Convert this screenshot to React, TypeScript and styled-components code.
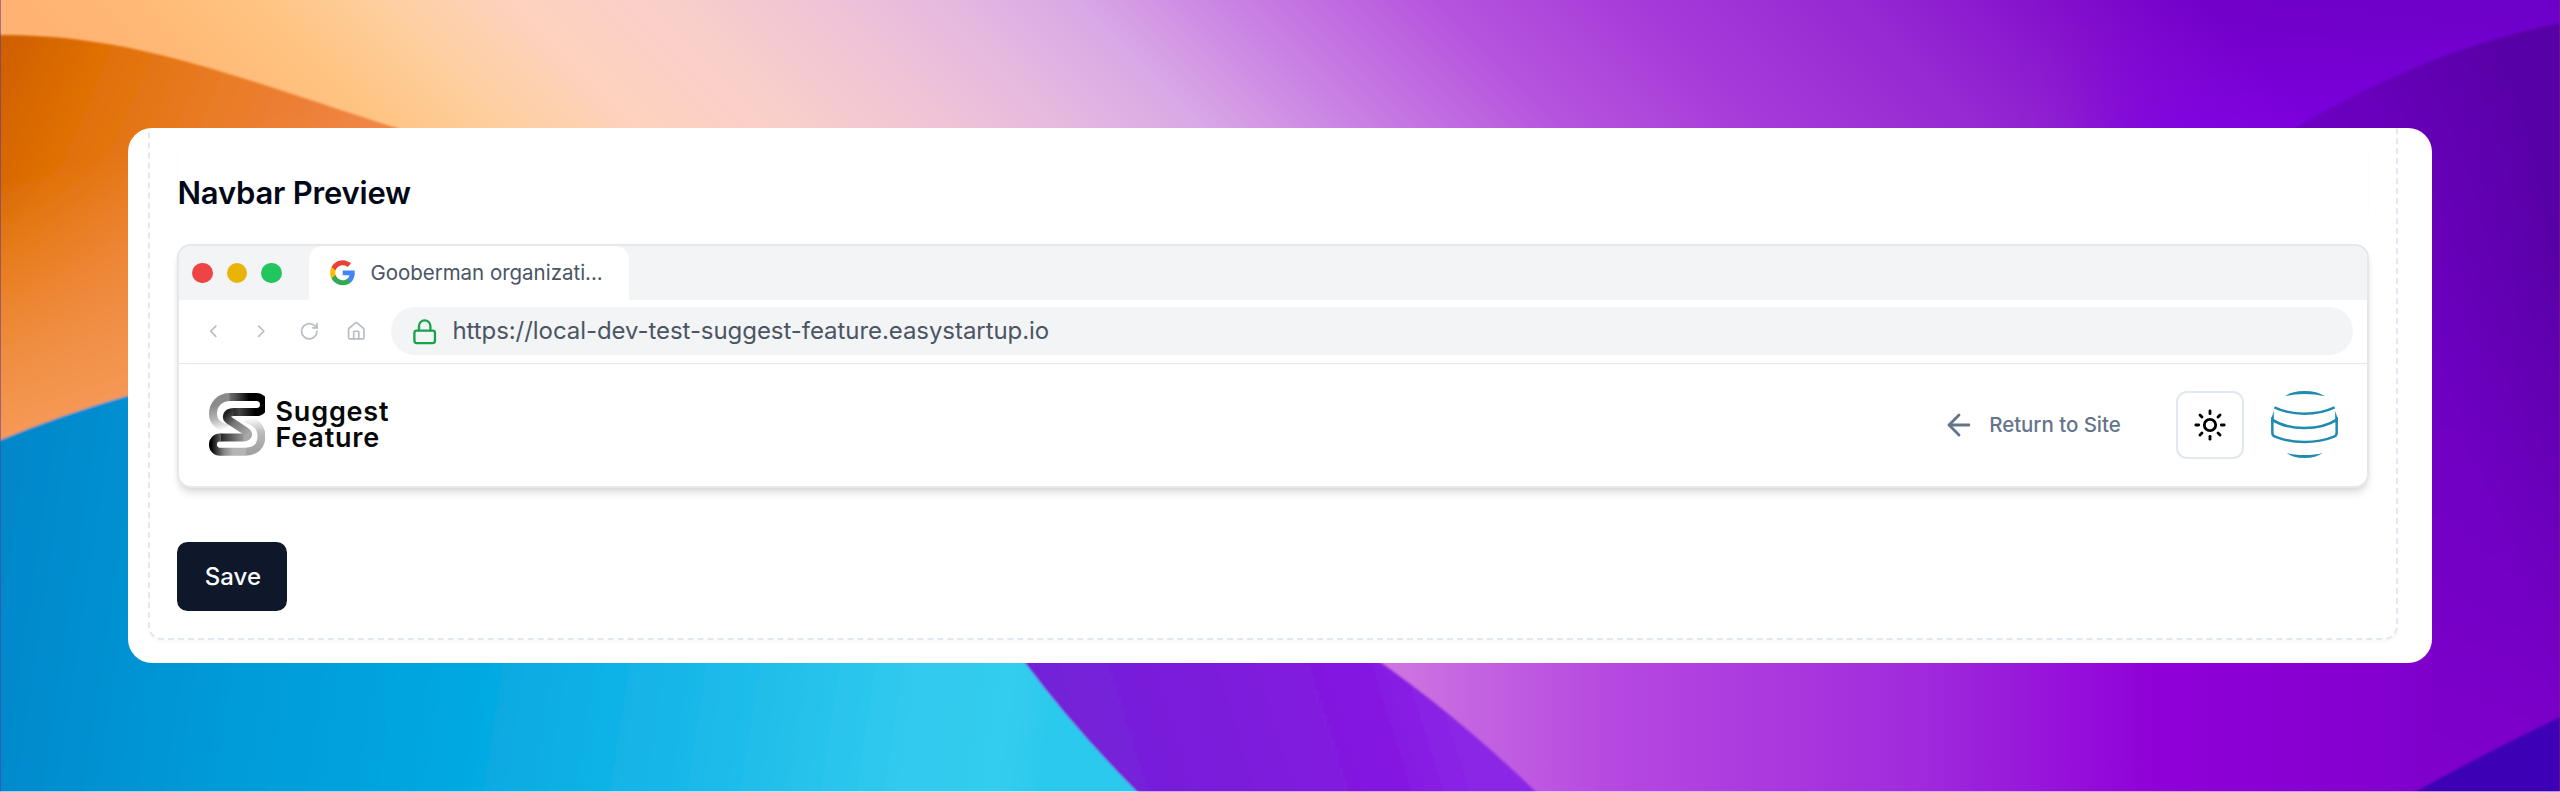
import React from 'react';
import styled, { createGlobalStyle } from 'styled-components';
import { ArrowLeft, ChevronLeft, ChevronRight, House, Lock, RotateCw, Sun } from 'lucide-react';

const GlobalStyle = createGlobalStyle`
  * { box-sizing: border-box; }
  html, body { margin: 0; padding: 0; overflow: hidden; }
  body { font-family: Inter, "Liberation Sans", sans-serif; }
`;

const Page = styled.main`
  position: relative;
  width: 2560px;
  height: 792px;
  padding: 128px 128px 129px;
  overflow: hidden;
`;

const WallpaperSvg = styled.svg`
  position: absolute;
  inset: 0;
  display: block;
`;

const Card = styled.section`
  position: relative;
  height: 535px;
  padding: 0 34px 23px 20px;
  border-radius: 24px;
  background: #fff;
  overflow: hidden;
`;

const DashedPanel = styled.div`
  height: 512px;
  padding: 11px 27px 0;
  border: 2px dashed #e2e8f0;
  border-top: 0;
  border-radius: 0 0 14px 14px;
  box-shadow: 0 2px 3px rgba(0, 0, 0, 0.03);
`;

const PreviewSection = styled.div`
  display: flex;
  flex-direction: column;
  align-items: stretch;
  border: 1px solid #fcfcfd;
  border-bottom: 0;
  border-radius: 15px 15px 0 0;
`;

const Title = styled.h3`
  margin: 33px 0 0 -0.5px;
  font-size: 31px;
  line-height: 40px;
  font-weight: 600;
  letter-spacing: -0.2px;
  color: #020817;
`;

const Browser = styled.div`
  height: 244px;
  margin: 31px 0 0;
  border: 2px solid #e5e7eb;
  border-radius: 14px;
  background: #fff;
  box-shadow: 0 7px 10px -2px rgba(0, 0, 0, 0.11), 0 3px 7px -3px rgba(0, 0, 0, 0.12);
  overflow: hidden;
`;

const TabStrip = styled.div`
  display: flex;
  height: 54px;
  padding-left: 13.4px;
  background: #f3f4f6;
`;

const WindowDots = styled.div`
  display: flex;
  align-items: center;
  gap: 13.7px;
  width: 116.6px;
`;

const Dot = styled.span<{ $color: string }>`
  width: 20.6px;
  height: 20.6px;
  border-radius: 50%;
  background: ${({ $color }) => $color};
`;

const Tab = styled.div`
  display: flex;
  align-items: center;
  gap: 13.5px;
  width: 320px;
  padding: 0 0 1px 20.5px;
  border-radius: 14px 14px 0 0;
  background: #fff;
  color: #4b5563;
  font-size: 20.5px;
  line-height: 27px;
  letter-spacing: -0.02px;
  white-space: nowrap;
`;

const Toolbar = styled.div`
  display: flex;
  align-items: center;
  height: 63.5px;
  padding: 0 14.2px 0 0;
  border-bottom: 1.7px solid #e2e8f0;
`;

const ToolbarIcons = styled.div`
  display: flex;
  gap: 27.3px;
  width: 211.5px;
  padding-left: 24px;
  color: #b9bdc5;
`;

const AddressBar = styled.div`
  display: flex;
  align-items: center;
  gap: 14px;
  flex: 1;
  height: 48px;
  padding-left: 20.5px;
  border-radius: 24px;
  background: #f3f4f6;
  color: #16a34a;
`;

const Url = styled.span`
  color: #4b5563;
  font-size: 24px;
  line-height: 34px;
  letter-spacing: -0.06px;
`;

const Navbar = styled.div`
  display: flex;
  align-items: center;
  justify-content: space-between;
  height: 122px;
  padding: 0 28.8px 0 29.5px;
`;

const Brand = styled.div`
  display: flex;
  align-items: center;
  gap: 10.5px;
`;

const BrandName = styled.div`
  display: flex;
  flex-direction: column;
  color: #080808;
  font-size: 27px;
  font-weight: 600;
  letter-spacing: 0.8px;
  line-height: 26px;
`;

const NavActions = styled.div`
  display: flex;
  align-items: center;
`;

const ReturnLink = styled.a`
  display: flex;
  align-items: center;
  gap: 13.5px;
  margin-right: 55px;
  color: #64748b;
  font-size: 20.5px;
  font-weight: 500;
  letter-spacing: -0.05px;
  white-space: nowrap;
`;

const ArrowSlot = styled.span`
  display: flex;
  width: 34px;
`;

const ThemeButton = styled.button`
  display: flex;
  align-items: center;
  justify-content: center;
  width: 68px;
  height: 68px;
  margin: 0 27.5px 0 0;
  padding: 0;
  border: 2px solid #e2e8f0;
  border-radius: 11px;
  background: #fff;
  color: #000;
`;

const SaveButton = styled.button`
  display: block;
  width: 110px;
  height: 68.5px;
  margin: 54px 0 0 0.4px;
  padding: 0 0 0 1px;
  border: 0;
  border-radius: 10.5px;
  background: #0f172a;
  color: #f8fafc;
  font-family: inherit;
  font-size: 24px;
  font-weight: 500;
`;

function Wallpaper() {
  return (
    <WallpaperSvg width="2560" height="792" viewBox="0 0 2560 792" preserveAspectRatio="none">
      <defs>
        <linearGradient id="sky" gradientUnits="userSpaceOnUse" x1="0" y1="0" x2="1280" y2="-1280">
          <stop offset="0" stopColor="#ffb272" />
          <stop offset="0.05" stopColor="#ffb976" />
          <stop offset="0.1" stopColor="#ffc482" />
          <stop offset="0.15" stopColor="#fecfa0" />
          <stop offset="0.2" stopColor="#fdd2be" />
          <stop offset="0.26" stopColor="#f9cfca" />
          <stop offset="0.32" stopColor="#f0c3d6" />
          <stop offset="0.37" stopColor="#e5b8e0" />
          <stop offset="0.42" stopColor="#d9a8e6" />
          <stop offset="0.48" stopColor="#ca82e3" />
          <stop offset="0.56" stopColor="#b654de" />
          <stop offset="0.64" stopColor="#a63ad9" />
          <stop offset="0.73" stopColor="#9428d2" />
          <stop offset="0.8" stopColor="#8410cc" />
          <stop offset="0.86" stopColor="#7000c6" />
          <stop offset="1" stopColor="#6a00c6" />
        </linearGradient>
        <linearGradient id="skyGlow" gradientUnits="userSpaceOnUse" x1="0" y1="0" x2="0" y2="140">
          <stop offset="0" stopColor="#7c00e0" stopOpacity="0" />
          <stop offset="1" stopColor="#8000e6" stopOpacity="0.85" />
        </linearGradient>
        <linearGradient id="pink" gradientUnits="userSpaceOnUse" x1="1380" y1="0" x2="2560" y2="0">
          <stop offset="0" stopColor="#d078e0" />
          <stop offset="0.08" stopColor="#c463e1" />
          <stop offset="0.2" stopColor="#b548e0" />
          <stop offset="0.46" stopColor="#a02adc" />
          <stop offset="0.66" stopColor="#8f00d8" />
          <stop offset="0.86" stopColor="#8300cf" />
          <stop offset="1" stopColor="#6c00b5" />
        </linearGradient>
        <linearGradient id="dusk" gradientUnits="userSpaceOnUse" x1="2290" y1="400" x2="2580" y2="310">
          <stop offset="0" stopColor="#7400c6" />
          <stop offset="0.5" stopColor="#6d00c1" />
          <stop offset="1" stopColor="#5800a6" />
        </linearGradient>
        <linearGradient id="duskFade" x1="0" y1="0" x2="0" y2="1">
          <stop offset="0" stopColor="#5a00a8" stopOpacity="0.3" />
          <stop offset="0.3" stopColor="#6c00c0" stopOpacity="0" />
          <stop offset="1" stopColor="#8c00d2" stopOpacity="0.6" />
        </linearGradient>
        <linearGradient id="orange" gradientUnits="userSpaceOnUse" x1="0" y1="60" x2="330" y2="200">
          <stop offset="0" stopColor="#cf6000" />
          <stop offset="0.25" stopColor="#e07004" />
          <stop offset="0.55" stopColor="#e87a22" />
          <stop offset="1" stopColor="#ef8342" />
        </linearGradient>
        <linearGradient id="orangeLow" gradientUnits="userSpaceOnUse" x1="0" y1="180" x2="60" y2="430">
          <stop offset="0" stopColor="#f69a58" stopOpacity="0" />
          <stop offset="1" stopColor="#f69a58" />
        </linearGradient>
        <linearGradient id="blue" gradientUnits="userSpaceOnUse" x1="0" y1="560" x2="1060" y2="720">
          <stop offset="0" stopColor="#0088cb" />
          <stop offset="0.25" stopColor="#009cda" />
          <stop offset="0.45" stopColor="#04a8e1" />
          <stop offset="0.62" stopColor="#14b5e7" />
          <stop offset="0.85" stopColor="#30c9ee" />
          <stop offset="0.95" stopColor="#34cdef" />
          <stop offset="1.0" stopColor="#2ac9ed" />
        </linearGradient>
        <linearGradient id="violet" gradientUnits="userSpaceOnUse" x1="1060" y1="760" x2="1440" y2="640">
          <stop offset="0" stopColor="#7222d8" />
          <stop offset="0.5" stopColor="#7e1cdc" />
          <stop offset="0.8" stopColor="#8518e2" />
          <stop offset="1" stopColor="#8c28e6" />
        </linearGradient>
        <filter id="soft" x="-2%" y="-2%" width="104%" height="104%">
          <feGaussianBlur stdDeviation="0.8" />
        </filter>
        <filter id="haze" x="-50%" y="-50%" width="200%" height="200%">
          <feGaussianBlur stdDeviation="40" />
        </filter>
      </defs>
      <rect width="2560" height="400" fill="url(#sky)" />
      <path d="M2110 -100 H2700 V240 H2110 Z" fill="url(#skyGlow)" filter="url(#haze)" />
      <rect y="400" width="2560" height="392" fill="url(#pink)" />
      <g filter="url(#soft)">
        <path d="M2230 165 Q2290 130 2295 128 Q2430 48 2565 22 V800 H2230 Z" fill="url(#dusk)" />
        <path d="M2230 165 Q2290 130 2295 128 Q2430 48 2565 22 V800 H2230 Z" fill="url(#duskFade)" />
      </g>
      <rect x="1380" y="640" width="1052" height="152" fill="url(#pink)" />
      <path d="M2410 795 Q2490 750 2565 715 V795 Z" fill="#3c00b4" filter="url(#soft)" />
      <g filter="url(#soft)">
        <path d="M-5 35 C130 33 230 75 397 128 L600 220 V600 H-5 Z" fill="url(#orange)" />
        <path d="M-5 35 C130 33 230 75 397 128 L600 220 V600 H-5 Z" fill="url(#orangeLow)" />
        <path d="M1000 640 H1348 Q1453 710 1541 797 H1000 Z" fill="url(#violet)" />
        <path d="M-5 442 Q60 415 130 395 L1000 635 L1025 663 Q1075 730 1142 797 H-5 Z" fill="url(#blue)" />
      </g>
      <rect width="1" height="792" fill="#5a3b9a" opacity="0.55" />
      <rect x="2559" width="1" height="792" fill="#8a1b8a" opacity="0.5" />
      <rect y="791" width="2560" height="1" fill="#fff" opacity="0.6" />
    </WallpaperSvg>
  );
}

function GoogleLogo() {
  return (
    <svg width="27.4" height="27.4" viewBox="0 0 24 24">
      <path fill="#4285F4" d="M22.56 12.25c0-.78-.07-1.53-.2-2.25H12v4.26h5.92c-.26 1.37-1.04 2.53-2.21 3.31v2.77h3.57c2.08-1.92 3.28-4.74 3.28-8.09z" />
      <path fill="#34A853" d="M12 23c2.97 0 5.46-.98 7.28-2.66l-3.57-2.77c-.98.66-2.23 1.06-3.71 1.06-2.86 0-5.29-1.93-6.16-4.53H2.18v2.84C3.99 20.53 7.7 23 12 23z" />
      <path fill="#FBBC05" d="M5.84 14.09c-.22-.66-.35-1.36-.35-2.09s.13-1.43.35-2.09V7.07H2.18C1.43 8.55 1 10.22 1 12s.43 3.45 1.18 4.93l3.66-2.84z" />
      <path fill="#EA4335" d="M12 5.38c1.62 0 3.06.56 4.21 1.64l3.15-3.15C17.45 2.09 14.97 1 12 1 7.7 1 3.99 3.47 2.18 7.07l3.66 2.84c.87-2.6 3.3-4.53 6.16-4.53z" />
    </svg>
  );
}

function BrandMark() {
  return (
    <svg width="56.5" height="63" viewBox="0 0 56.5 63" fill="none" strokeWidth="8">
      <defs>
        <linearGradient id="markFadeL" gradientUnits="userSpaceOnUse" x1="8" y1="12" x2="15" y2="37">
          <stop offset="0" stopColor="#8a8a8a" />
          <stop offset="0.5" stopColor="#b5b5b5" />
          <stop offset="1" stopColor="#fff" />
        </linearGradient>
        <linearGradient id="markTop" gradientUnits="userSpaceOnUse" x1="14" y1="0" x2="40" y2="0">
          <stop offset="0" stopColor="#8a8a8a" />
          <stop offset="0.5" stopColor="#505050" />
          <stop offset="1" stopColor="#000" />
        </linearGradient>
        <linearGradient id="markMid" gradientUnits="userSpaceOnUse" x1="18" y1="20" x2="40" y2="40">
          <stop offset="0" stopColor="#222" />
          <stop offset="0.4" stopColor="#777" />
          <stop offset="1" stopColor="#a8a8a8" />
        </linearGradient>
        <linearGradient id="markBar" gradientUnits="userSpaceOnUse" x1="22" y1="0" x2="46" y2="0">
          <stop offset="0" stopColor="#222" />
          <stop offset="0.35" stopColor="#444" />
          <stop offset="1" stopColor="#000" />
        </linearGradient>
        <linearGradient id="markLow" gradientUnits="userSpaceOnUse" x1="6" y1="0" x2="38" y2="0">
          <stop offset="0" stopColor="#000" />
          <stop offset="0.35" stopColor="#444" />
          <stop offset="1" stopColor="#a8a8a8" />
        </linearGradient>
        <linearGradient id="markBase" gradientUnits="userSpaceOnUse" x1="2" y1="0" x2="24" y2="0">
          <stop offset="0" stopColor="#000" />
          <stop offset="0.6" stopColor="#888" />
          <stop offset="1" stopColor="#b4b4b4" />
        </linearGradient>
        <linearGradient id="markFadeR" gradientUnits="userSpaceOnUse" x1="44" y1="58" x2="40" y2="25">
          <stop offset="0" stopColor="#a2a2a2" />
          <stop offset="0.55" stopColor="#bdbdbd" />
          <stop offset="1" stopColor="#fff" />
        </linearGradient>
      </defs>
      <path stroke="url(#markFadeL)" d="M19 35.5 C10 34 4 29 4 21 C4 11 11 4 21 4" />
      <path stroke="url(#markTop)" d="M20.5 4 H47.5 A7.5 7.5 0 0 1 47.5 19 H45" />
      <path stroke="url(#markFadeR)" d="M36.5 58.7 C47 58.7 52.5 52 52.5 43 C52.5 34 46 28 36 25.5" />
      <path stroke="url(#markMid)" d="M25 19 C17 19 16 25 21 28 L36.5 38 C41 41 39 44.5 34 44.5" />
      <path stroke="url(#markBar)" d="M47.5 19 H24.5" />
      <path stroke="url(#markLow)" d="M34.5 44.500 L11 44.501" />
      <path stroke="url(#markBase)" d="M12 44.5 H11 A7.1 7.1 0 0 0 11 58.7 H37" />
    </svg>
  );
}

function AvatarGlobe() {
  return (
    <svg width="67" height="67" viewBox="97 65 201 201" fill="none" stroke="#1f8bb0" strokeWidth="7.5">
      <path fill="#1f8bb0" stroke="none" d="M139 81 Q158 65 197 65 Q237 65 258 81 Q230 74 197 74 Q165 74 139 81 Z" />
      <path d="M107 114 Q147 133 197 133 Q248 133 288 114" />
      <path d="M99 150 Q138 176 197 176 Q257 176 296 150" />
      <path d="M101 143 V190 Q101 199 109 202 Q148 218 197 218 Q247 218 286 202 Q294 199 294 190 V143" />
      <path fill="#1f8bb0" stroke="none" d="M97.5 160 Q98 140 106 124 L104.5 160 Z M297.5 160 Q297 140 289 124 L290.5 160 Z" />
      <path fill="#1f8bb0" stroke="none" d="M144 251 Q166 257 197 257 Q229 257 252 251 Q232 266 197 266 Q162 266 144 251 Z" />
    </svg>
  );
}

export default function App() {
  return (
    <>
      <GlobalStyle />
      <Page>
        <Wallpaper />
        <Card>
          <DashedPanel>
            <PreviewSection>
              <Title>Navbar Preview</Title>
            </PreviewSection>
            <Browser>
              <TabStrip>
                <WindowDots>
                  <Dot $color="#ef4444" />
                  <Dot $color="#eab308" />
                  <Dot $color="#22c55e" />
                </WindowDots>
                <Tab>
                  <GoogleLogo />
                  <span>Gooberman organizati...</span>
                </Tab>
              </TabStrip>
              <Toolbar>
                <ToolbarIcons>
                  <ChevronLeft size={20.5} />
                  <ChevronRight size={20.5} />
                  <RotateCw size={20.5} />
                  <House size={20.5} />
                </ToolbarIcons>
                <AddressBar>
                  <Lock size={27.4} />
                  <Url>https://local-dev-test-suggest-feature.easystartup.io</Url>
                </AddressBar>
              </Toolbar>
              <Navbar>
                <Brand>
                  <BrandMark />
                  <BrandName>
                    <span>Suggest</span>
                    <span>Feature</span>
                  </BrandName>
                </Brand>
                <NavActions>
                  <ReturnLink>
                    <ArrowSlot>
                      <ArrowLeft size={34} />
                    </ArrowSlot>
                    <span>Return to Site</span>
                  </ReturnLink>
                  <ThemeButton aria-label="Theme">
                    <Sun size={34} />
                  </ThemeButton>
                  <AvatarGlobe />
                </NavActions>
              </Navbar>
            </Browser>
            <SaveButton>Save</SaveButton>
          </DashedPanel>
        </Card>
      </Page>
    </>
  );
}
